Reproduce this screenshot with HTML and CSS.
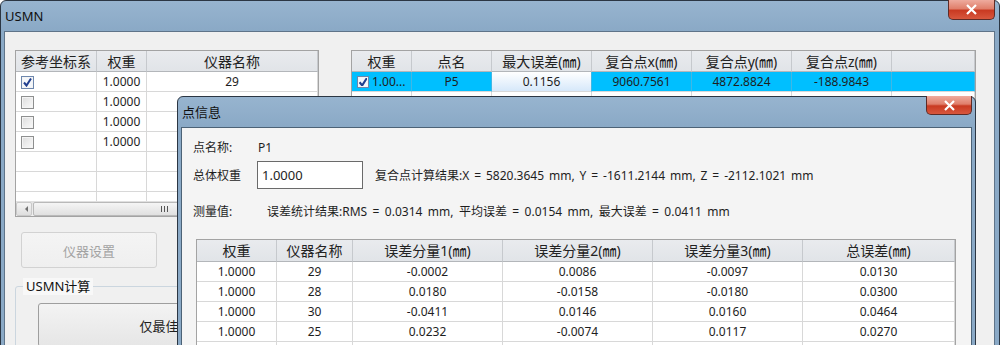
FILE: index.html
```html
<!DOCTYPE html>
<html lang="zh-CN">
<head>
    <meta charset="UTF-8">
    <title>USMN</title>
    <link rel="stylesheet" href="styles.css">
</head>
<body>
    <div class="window main">
        <div class="titlebar">
            <span class="title">USMN</span>
            <span class="close-btn">
                <svg width="13" height="11" viewBox="0 0 13 11"><path d="M2 1 L11 10 M11 1 L2 10" stroke="#fff" stroke-width="2.2" fill="none"/></svg>
            </span>
        </div>
        <div class="client">
            <!-- left side: reference systems + buttons -->
            <div class="left-panel">
                <div class="grid-box left-grid">
                    <div class="grid-area">
                        <table class="grid">
                            <colgroup><col style="width:81px"><col style="width:50px"><col style="width:171px"></colgroup>
                            <tr><th>参考坐标系</th><th>权重</th><th>仪器名称</th></tr>
                            <tr><td class="chk-cell"><span class="chk checked"></span></td><td>1.0000</td><td>29</td></tr>
                            <tr><td class="chk-cell"><span class="chk"></span></td><td>1.0000</td><td></td></tr>
                            <tr><td class="chk-cell"><span class="chk"></span></td><td>1.0000</td><td></td></tr>
                            <tr><td class="chk-cell"><span class="chk"></span></td><td>1.0000</td><td></td></tr>
                            <tr><td></td><td></td><td></td></tr>
                            <tr><td></td><td></td><td></td></tr>
                            <tr><td></td><td></td><td></td></tr>
                        </table>
                    </div>
                    <div class="hscroll">
                        <span class="sb-arrow"></span>
                        <span class="sb-thumb"><span class="grip"></span></span>
                    </div>
                </div>
                <button class="btn setup-btn" disabled>仪器设置</button>
                <fieldset class="group">
                    <legend>USMN计算</legend>
                    <button class="btn big-btn">仅最佳拟合</button>
                </fieldset>
            </div>

            <!-- right side: points -->
            <div class="grid-box right-grid">
                <table class="grid">
                    <colgroup><col style="width:60px"><col style="width:80px"><col style="width:100px"><col style="width:100px"><col style="width:100px"><col style="width:100px"><col style="width:83px"></colgroup>
                    <tr><th>权重</th><th>点名</th><th>最大误差(㎜)</th><th>复合点x(㎜)</th><th>复合点y(㎜)</th><th>复合点z(㎜)</th><th></th></tr>
                    <tr class="selected"><td class="chk-cell left"><span class="chk checked small"></span>1.00...</td><td>P5</td><td class="focus">0.1156</td><td>9060.7561</td><td>4872.8824</td><td>-188.9843</td><td></td></tr>
                    <tr><td></td><td></td><td></td><td></td><td></td><td></td><td></td></tr>
                </table>
            </div>
        </div>
    </div>

    <!-- point info dialog -->
    <div class="window dialog">
        <div class="titlebar">
            <span class="title">点信息</span>
            <span class="close-btn small-close">
                <svg width="13" height="11" viewBox="0 0 13 11"><path d="M2 1 L11 10 M11 1 L2 10" stroke="#fff" stroke-width="2.2" fill="none"/></svg>
            </span>
        </div>
        <div class="dlg-client">
            <div class="info-row">
                <span class="lbl">点名称:</span>
                <span>P1</span>
            </div>
            <div class="info-row tall">
                <span class="lbl short">总体权重</span>
                <span class="input">1.0000</span>
                <span class="result">复合点计算结果:X = 5820.3645 mm, Y = -1611.2144 mm, Z = -2112.1021 mm</span>
            </div>
            <div class="info-row gap">
                <span class="lbl">测量值:</span>
                <span class="stats">误差统计结果:RMS = 0.0314 mm, 平均误差 = 0.0154 mm, 最大误差 = 0.0411 mm</span>
            </div>
            <div class="grid-box dlg-grid">
                <table class="grid">
                    <colgroup><col style="width:80px"><col style="width:76px"><col style="width:150px"><col style="width:150px"><col style="width:150px"><col style="width:152px"></colgroup>
                    <tr><th>权重</th><th>仪器名称</th><th>误差分量1(㎜)</th><th>误差分量2(㎜)</th><th>误差分量3(㎜)</th><th>总误差(㎜)</th></tr>
                    <tr><td>1.0000</td><td>29</td><td>-0.0002</td><td>0.0086</td><td>-0.0097</td><td>0.0130</td></tr>
                    <tr><td>1.0000</td><td>28</td><td>0.0180</td><td>-0.0158</td><td>-0.0180</td><td>0.0300</td></tr>
                    <tr><td>1.0000</td><td>30</td><td>-0.0411</td><td>0.0146</td><td>0.0160</td><td>0.0464</td></tr>
                    <tr><td>1.0000</td><td>25</td><td>0.0232</td><td>-0.0074</td><td>0.0117</td><td>0.0270</td></tr>
                    <tr><td></td><td></td><td></td><td></td><td></td><td></td></tr>
                </table>
            </div>
        </div>
    </div>
</body>
</html>
```

FILE: styles.css
```css
* {
    box-sizing: border-box;
    margin: 0;
    padding: 0;
}

body {
    width: 1000px;
    height: 345px;
    overflow: hidden;
    position: relative;
    background: #ffffff;
    font-family: "Noto Sans", "Noto Sans CJK SC", sans-serif;
    font-size: 12px;
    color: #1e1e1e;
}

/* window frame */
.window {
    border: 1px solid #2b3643;
    border-radius: 6px 6px 0 0;
    background: linear-gradient(#97b4cf, #8aa9c6 30px);
    padding: 0 3px;
}

.main {
    width: 1000px;
    height: 420px;
    padding-left: 3px;
    padding-right: 4px;
}

.titlebar {
    height: 30px;
    display: flex;
    justify-content: space-between;
    align-items: flex-start;
}

.title {
    line-height: 30px;
    padding-left: 1px;
    font-size: 13px;
    color: #101010;
}

.close-btn {
    width: 47px;
    height: 20px;
    margin-top: -1px;
    border: 1px solid #5e2b26;
    border-top: none;
    border-radius: 0 0 5px 5px;
    background: linear-gradient(#eeab9e, #e07f6b 45%, #c93a22 55%, #d8573d);
    display: flex;
    align-items: center;
    justify-content: center;
}

.small-close {
    width: 46px;
    height: 19px;
}

.client {
    border: 1px solid #5f7489;
    background: #f0f0f0;
    height: 400px;
    display: flex;
    align-items: flex-start;
    padding: 18px 0 0 10px;
}

/* grids */
.grid-box {
    border: 1px solid #a3a3a3;
    background: #ffffff;
    overflow: hidden;
}

.grid {
    width: 100%;
    border-collapse: separate;
    border-spacing: 0;
    table-layout: fixed;
}

.grid th {
    height: 21px;
    font-size: 14px;
    font-weight: normal;
    color: #222;
    background: linear-gradient(#e9ebee, #e1e4e8);
    border-right: 1px solid #c6c9cd;
    border-bottom: 1px solid #b3b6ba;
    white-space: nowrap;
    overflow: hidden;
    padding: 0;
    line-height: 19px;
}

.grid td {
    height: 20px;
    padding: 0 2px;
    text-align: center;
    border-right: 1px solid #d8d8d8;
    border-bottom: 1px solid #d8d8d8;
    white-space: nowrap;
    overflow: hidden;
    line-height: 19px;
}

.chk-cell {
    text-align: left !important;
    padding-left: 5px !important;
}

.chk {
    display: inline-block;
    width: 13px;
    height: 13px;
    vertical-align: -3px;
    border: 1px solid #8e8f8f;
    background: linear-gradient(135deg, #dcdcdc, #fbfbfb);
    box-shadow: inset 0 0 0 1px #f4f4f4;
}

.chk.checked {
    border-color: #6d87ad;
    background: #f4f7fb url("data:image/svg+xml;utf8,<svg xmlns='http://www.w3.org/2000/svg' width='11' height='11'><path d='M2 5.5 L4.5 8.5 L9 1.5' stroke='%23213f8f' stroke-width='2' fill='none'/></svg>") center no-repeat;
}

.chk.small {
    width: 12px;
    height: 12px;
    margin-right: 3px;
    vertical-align: -2px;
}

/* left column */
.left-panel {
    width: 304px;
    display: flex;
    flex-direction: column;
    align-items: flex-start;
}

.left-grid {
    width: 304px;
    height: 167px;
    display: flex;
    flex-direction: column;
}

.grid-area {
    flex: 1;
    overflow: hidden;
}

.hscroll {
    height: 15px;
    display: flex;
    background: linear-gradient(#e3e3e3, #f0f0f0);
    border-top: 1px solid #e0e0e0;
}

.sb-arrow {
    width: 16px;
    border: 1px solid #c9c9c9;
    border-radius: 2px;
    background: linear-gradient(#f4f4f4, #dedede);
    position: relative;
}

.sb-arrow::after {
    content: "";
    position: absolute;
    left: 5px;
    top: 3px;
    border: 3px solid transparent;
    border-right: 3px solid #707070;
}

.sb-thumb {
    width: 262px;
    margin-left: 1px;
    border: 1px solid #b9b9b9;
    border-radius: 2px;
    background: linear-gradient(#f5f5f5, #e0e0e0);
    display: flex;
    justify-content: center;
    align-items: center;
}

.grip {
    width: 7px;
    height: 6px;
    background: repeating-linear-gradient(90deg, #555 0 1px, transparent 1px 3px);
}

.btn {
    font-family: inherit;
    font-size: 13px;
    color: #1e1e1e;
    border: 1px solid #acacac;
    border-radius: 3px;
    background: linear-gradient(#f3f3f3, #e6e6e6);
}

.setup-btn {
    width: 136px;
    height: 36px;
    margin: 15px 0 0 6px;
    color: #a3a3a3;
    border-color: #d2d2d2;
    background: linear-gradient(#f4f4f4, #efefef);
}

.group {
    width: 304px;
    height: 100px;
    margin-top: 10px;
    border: 1px solid #cbd6df;
    border-radius: 3px;
}

.group legend {
    margin-left: 7px;
    padding: 0 3px;
    font-size: 13px;
    line-height: 17px;
    background: #f8f8f8;
    color: #111;
}

.big-btn {
    width: 268px;
    height: 44px;
    margin: 8px 0 0 22px;
    border-color: #9e9e9e;
}

/* right column */
.right-grid {
    width: 625px;
    height: 120px;
    margin-left: 32px;
}

.grid tr.selected td {
    background: #00bfff;
    border-right-color: #3fb7e5;
}

.grid tr.selected td.focus {
    background: linear-gradient(#ffffff, #d6e8fa);
}

.grid td.left {
    padding-left: 5px;
}

/* dialog */
.dialog {
    position: absolute;
    left: 177px;
    top: 96px;
    width: 799px;
    height: 300px;
}

.dlg-client {
    border: 1px solid #4c6276;
    background: #f4f4f4;
    height: 260px;
    padding: 9px 0 0 11px;
}

.info-row {
    height: 20px;
    display: flex;
    align-items: center;
}

.info-row.tall {
    height: 28px;
    margin-top: 4px;
}

.info-row.gap {
    margin-top: 12px;
}

.lbl {
    width: 65px;
}

.lbl.short {
    width: 64px;
}

.input {
    width: 106px;
    height: 28px;
    line-height: 26px;
    padding-left: 4px;
    border: 1px solid #6a6a6a;
    background: #ffffff;
    font-size: 13px;
}

.result {
    margin-left: 12px;
    word-spacing: 1.8px;
}

.stats {
    margin-left: 9px;
    word-spacing: 2.3px;
}

.dlg-grid {
    width: 760px;
    height: 130px;
    margin: 18px 0 0 3px;
}

.dlg-grid th {
    height: 22px;
    line-height: 20px;
}
```
